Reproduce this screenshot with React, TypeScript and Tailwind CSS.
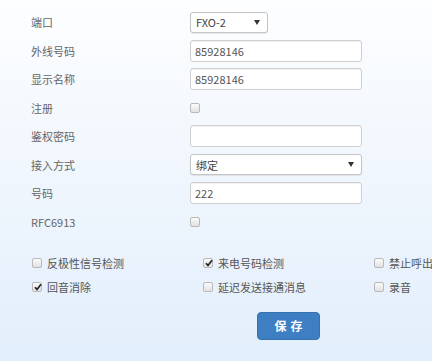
import React from 'react';

const font = { fontFamily: '"Noto Sans CJK SC", "Noto Sans", sans-serif' };

function Box({ checked = false }: { checked?: boolean }) {
  return (
    <span className="relative inline-block w-[10px] h-[10px] rounded-[2px] border border-[#b9b9b9] bg-gradient-to-b from-[#fafafa] to-[#e2e2e2] shrink-0">
      {checked && (
        <svg viewBox="0 0 10 10" className="absolute left-[0px] top-[-1px] w-[10px] h-[10px]">
          <path d="M2 5.2 L4 7.4 L8 2.2" fill="none" stroke="#222" strokeWidth="1.7" />
        </svg>
      )}
    </span>
  );
}

function Caret() {
  return (
    <svg viewBox="0 0 6 5" className="w-[6px] h-[5px]">
      <path d="M0 0 H6 L3 5 Z" fill="#333" />
    </svg>
  );
}

function Row({ label, children }: { label: string; children: React.ReactNode }) {
  return (
    <div className="flex items-center h-[28.5px]">
      <div className="w-[190px] pl-[31px] text-[#666]">{label}</div>
      <div className="flex items-center">{children}</div>
    </div>
  );
}

const inputCls =
  'flex items-center h-[22px] w-[172px] px-[4px] border border-[#cfcfcf] rounded-[3px] bg-white shadow-[inset_0_1px_1px_rgba(0,0,0,0.06)] text-[#555]';

const selectCls =
  'flex items-center justify-between h-[21px] px-[5px] pr-[7px] border border-[#c4c4c4] rounded-[3px] bg-white shadow-[0_1px_1px_rgba(0,0,0,0.08)] text-[#444]';

export default function App() {
  const opts: [string, boolean][] = [
    ['反极性信号检测', false],
    ['来电号码检测', true],
    ['禁止呼出', false],
    ['回音消除', true],
    ['延迟发送接通消息', false],
    ['录音', false],
  ];
  return (
    <div
      className="w-[432px] h-[361px] overflow-hidden bg-gradient-to-b from-[#fdfeff] to-[#e2eefb] text-[11px]"
      style={font}
    >
      <div className="pt-[8px]">
        <Row label="端口">
          <div className={`${selectCls} w-[78px]`}>
            <span>FXO-2</span>
            <Caret />
          </div>
        </Row>
        <Row label="外线号码">
          <div className={inputCls}>85928146</div>
        </Row>
        <Row label="显示名称">
          <div className={inputCls}>85928146</div>
        </Row>
        <Row label="注册">
          <Box />
        </Row>
        <Row label="鉴权密码">
          <div className={inputCls}></div>
        </Row>
        <Row label="接入方式">
          <div className={`${selectCls} w-[172px]`}>
            <span>绑定</span>
            <Caret />
          </div>
        </Row>
        <Row label="号码">
          <div className={inputCls}>222</div>
        </Row>
        <Row label="RFC6913">
          <Box />
        </Row>
      </div>
      <div className="grid grid-cols-[171px_171px_90px] pl-[32px] mt-[18px] gap-y-[6px] text-[#555]">
        {opts.map(([t, c]) => (
          <div key={t} className="flex items-center h-[18px] gap-[5px]">
            <Box checked={c} />
            <span className="whitespace-nowrap">{t}</span>
          </div>
        ))}
      </div>
      <div className="pl-[257px] mt-[16px]">
        <button className="w-[63px] h-[28px] rounded-[4px] bg-[#3d7fc2] border border-[#3572b0] text-white text-[12px] font-bold tracking-[4px] pl-[4px]">
          保存
        </button>
      </div>
    </div>
  );
}
